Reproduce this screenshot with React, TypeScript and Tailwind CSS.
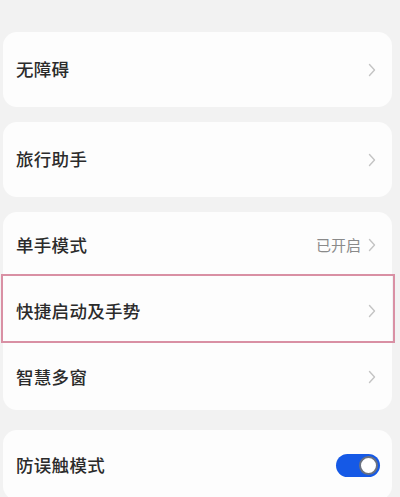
import React from "react";

interface RowProps {
  label: string;
  value?: string;
  toggle?: boolean;
  highlighted?: boolean;
  height?: string;
}

const font = { fontFamily: '"Noto Sans CJK SC", "Noto Sans", sans-serif' };

function Chevron() {
  return (
    <svg width="8" height="14" viewBox="0 0 8 14" className="shrink-0">
      <path d="M1.5 1.5 L6.5 7 L1.5 12.5" fill="none" stroke="#c4c4c4" strokeWidth="1.4" strokeLinecap="round" strokeLinejoin="round" />
    </svg>
  );
}

function Toggle() {
  return (
    <div className="w-[44px] h-[23px] rounded-full bg-[#1559e6] flex items-center justify-end pr-[2px]">
      <div className="w-[19px] h-[19px] rounded-full bg-white border-2 border-[#6b7280]"></div>
    </div>
  );
}

function Row({ label, value, toggle, highlighted, height = "h-[66px]" }: RowProps) {
  return (
    <div className={`relative flex items-center justify-between pl-[13px] ${toggle ? "pr-[12px]" : "pr-[16px]"} ${height}`}>
      <span className="text-[17.5px] font-medium text-[#2b2b2b] tracking-[0.3px]">{label}</span>
      <div className="flex items-center gap-[7px]">
        {value && <span className="text-[15px] text-[#8a8a8a]">{value}</span>}
        {toggle ? <Toggle /> : <Chevron />}
      </div>
      {/* Highlight frame */}
      {highlighted && (
        <span className="absolute left-[-2px] right-[-3px] top-[-4px] bottom-[1px] border-2 border-[#d990a4]"></span>
      )}
    </div>
  );
}

export default function App() {
  return (
    <div className="w-[400px] h-[497px] overflow-hidden bg-[#f2f2f2] pt-[32px] pl-[3px] pr-[8px]" style={font}>
      <div className="flex flex-col gap-[15px]">
        <div className="bg-[#fdfdfd] rounded-[14px]">
          <Row label="无障碍" height="h-[75px]" />
        </div>

        <div className="bg-[#fdfdfd] rounded-[14px]">
          <Row label="旅行助手" height="h-[75px]" />
        </div>

        <div className="bg-[#fdfdfd] rounded-[14px] flex flex-col">
          <Row label="单手模式" value="已开启" />
          <Row label="快捷启动及手势" highlighted />
          <Row label="智慧多窗" />
        </div>

        <div className="bg-[#fdfdfd] rounded-[14px] mt-[5px]">
          <Row label="防误触模式" toggle height="h-[70px]" />
        </div>
      </div>
    </div>
  );
}
